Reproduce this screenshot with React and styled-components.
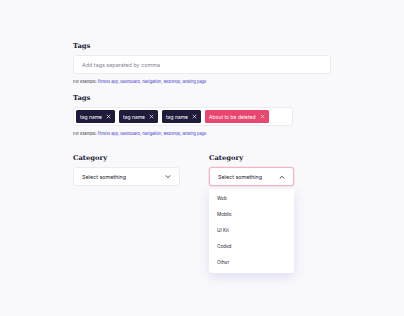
import styled, { createGlobalStyle } from "styled-components";

const GlobalStyle = createGlobalStyle`
  html, body {
    margin: 0;
    padding: 0;
    background: #f9f9fc;
  }
  body {
    font-family: Inter, "Noto Sans", sans-serif;
    width: 404px;
    height: 316px;
    overflow: hidden;
  }
`;

const Page = styled.div`
  padding: 41px 73px 0 73px;
  display: flex;
  flex-direction: column;
  align-items: flex-start;
`;

const Field = styled.div`
  display: flex;
  flex-direction: column;
  align-items: flex-start;
  flex: none;
  margin-bottom: ${(p) => p.$gap || 0}px;
  position: relative;
`;

const Label = styled.div`
  font-family: "DejaVu Serif", "Liberation Serif", serif;
  font-weight: 700;
  font-size: 6.8px;
  line-height: 10px;
  height: 10px;
  color: #1b1a2e;
  margin: 0 0 4px 0;
`;

const Input = styled.div`
  box-sizing: border-box;
  width: ${(p) => p.$width}px;
  height: 19px;
  background: #fff;
  border: 1px solid #ebebf2;
  border-radius: 3px;
  display: flex;
  align-items: center;
  padding: 0 ${(p) => p.$pad ?? 8}px;
  gap: 4px;
  font-size: 5.4px;
  color: #85849a;
`;

const Helper = styled.div`
  margin-top: 5px;
  font-size: 3.9px;
  line-height: 6px;
  color: #2d2c3c;
  span {
    color: #3b35c9;
  }
`;

const Chip = styled.div`
  height: 13px;
  display: flex;
  align-items: center;
  gap: 4px;
  padding: 0 4px;
  border-radius: 1.5px;
  background: ${(p) => (p.$danger ? "#e9466f" : "#1e1c3a")};
  color: #fff;
  font-size: 5px;
  white-space: nowrap;
  svg {
    display: block;
  }
`;

const Row = styled.div`
  display: flex;
  align-items: flex-start;
  gap: 29px;
`;

const Select = styled.div`
  box-sizing: border-box;
  width: ${(p) => p.$width}px;
  height: 19px;
  background: #fff;
  border: 1px solid ${(p) => (p.$open ? "#f1b7c6" : "#ebebf2")};
  box-shadow: ${(p) => (p.$open ? "0 0 0 0.6px #f6d3dc" : "none")};
  border-radius: 3px;
  display: flex;
  align-items: center;
  justify-content: space-between;
  padding: 0 8px;
  font-size: 5.4px;
  color: #1e1c30;
  svg {
    display: block;
  }
`;

const Menu = styled.ul`
  position: absolute;
  top: 36px;
  left: 0;
  width: 85px;
  box-sizing: border-box;
  margin: 0;
  padding: 2px 0;
  list-style: none;
  background: #fff;
  border-radius: 2px;
  box-shadow: 0 4px 12px rgba(90, 80, 180, 0.16);
`;

const Item = styled.li`
  height: 16px;
  line-height: 16px;
  padding-left: 8px;
  font-size: 4.6px;
  color: #2a2938;
`;

const Cross = () => (
  <svg width="5" height="5" viewBox="0 0 10 10">
    <path d="M2 2L8 8M8 2L2 8" stroke="#fff" strokeWidth="1.3" strokeLinecap="round" />
  </svg>
);

const Chevron = ({ up }) => (
  <svg width="6" height="4" viewBox="0 0 12 8">
    <path
      d={up ? "M2 6.5L6 2.5L10 6.5" : "M2 1.5L6 5.5L10 1.5"}
      fill="none"
      stroke="#1e1c30"
      strokeWidth="1.6"
      strokeLinecap="round"
      strokeLinejoin="round"
    />
  </svg>
);

const HelperText = () => (
  <Helper>
    For example: <span>fitness app, dashboard, navigation, webshop, landing page</span>
  </Helper>
);

const options = ["Web", "Mobile", "UI Kit", "Coded", "Other"];

export default function App() {
  return (
    <>
      <GlobalStyle />
      <Page>
        <Field $gap={8}>
          <Label>Tags</Label>
          <Input $width={258}>Add tags separated by comma</Input>
          <HelperText />
        </Field>
        <Field $gap={16}>
          <Label>Tags</Label>
          <Input $width={220} $pad={2}>
            <Chip>
              tag name <Cross />
            </Chip>
            <Chip>
              tag name <Cross />
            </Chip>
            <Chip>
              tag name <Cross />
            </Chip>
            <Chip $danger>
              About to be deleted <Cross />
            </Chip>
          </Input>
          <HelperText />
        </Field>
        <Row>
          <Field>
            <Label>Category</Label>
            <Select $width={107}>
              Select something
              <Chevron />
            </Select>
          </Field>
          <Field>
            <Label>Category</Label>
            <Select $width={85} $open>
              Select something
              <Chevron up />
            </Select>
            <Menu>
              {options.map((o) => (
                <Item key={o}>{o}</Item>
              ))}
            </Menu>
          </Field>
        </Row>
      </Page>
    </>
  );
}
